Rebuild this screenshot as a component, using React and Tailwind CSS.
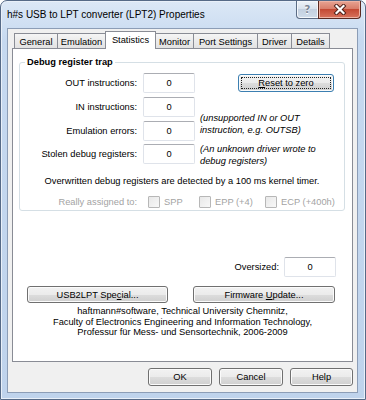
const btnBase =
  "flex items-center justify-center rounded-[3px] border bg-[linear-gradient(#f2f2f2,#ebebeb_50%,#dddddd_50%,#cfcfcf)] shadow-[inset_0_0_0_1px_#fbfbfb] text-black";

function Btn({ children, className = "" }) {
  return <div className={`${btnBase} border-[#707070] ${className}`}>{children}</div>;
}

function DefBtn({ children, className = "" }) {
  return (
    <div className={`${btnBase} border-[#3c7fb1] p-[2px] ${className}`}>
      <div className="flex h-full w-full items-center justify-center border border-dotted border-[#222]">
        {children}
      </div>
    </div>
  );
}

function Field({ className = "" }) {
  return (
    <div
      className={`flex h-[20px] w-[52px] shrink-0 items-center justify-center rounded-[2px] border border-[#dfe3ea] border-t-[#abadb3] bg-white ${className}`}
    >
      0
    </div>
  );
}

function Check({ label, className = "" }) {
  return (
    <div className={`flex items-center ${className}`}>
      <div className="h-[12px] w-[12px] shrink-0 rounded-[1px] border border-[#b7b7b7] bg-[linear-gradient(135deg,#e8e8e8,#f8f8f8)]" />
      <span className="ml-[4px] text-[#a3a3a3]">{label}</span>
    </div>
  );
}

const tabs = [
  { t: "General", w: "w-[44px]" },
  { t: "Emulation", w: "w-[49px]" },
  { t: "Statistics", w: "w-[51px]", sel: true },
  { t: "Monitor", w: "w-[39px]" },
  { t: "Port Settings", w: "w-[65px]" },
  { t: "Driver", w: "w-[35px]" },
  { t: "Details", w: "w-[39px]" },
];

export default function App() {
  return (
    <div className="h-[400px] w-[366px] overflow-hidden bg-white font-['Liberation_Sans',Arial,sans-serif] text-[9.3px] leading-[12px] text-black">
      <div className="flex h-[400px] w-[366px] flex-col rounded-t-[7px] border border-[#566a87] bg-[linear-gradient(#dce8f6,#c6d9f0_40px,#bfd3ec)] shadow-[inset_0_0_0_1px_#e9f0f9]">
        {/* title bar */}
        <div className="flex h-[27px] shrink-0 items-start">
          <div className="mt-[7px] pl-[6px] text-[10px] leading-[13px] text-black">
            h#s USB to LPT converter (LPT2) Properties
          </div>
          <div className="ml-auto mr-[4px] flex h-[18px]">
            <div className="flex w-[23px] items-center justify-center rounded-bl-[4px] border border-t-0 border-[#5b6c85] bg-[linear-gradient(#eef3f9,#d6e0ec_50%,#c3d0e0_50%,#cfdcea)] shadow-[inset_0_0_0_1px_#f4f7fb]">
              <span className="font-['DejaVu_Sans',sans-serif] text-[10px] font-bold leading-[10px] text-[#7c8797] [text-shadow:0_1px_0_#fff]">
                ?
              </span>
            </div>
            <div className="-ml-px flex w-[43px] items-center justify-center rounded-br-[4px] border border-t-0 border-[#5b2a22] bg-[linear-gradient(#e8a493,#d77a66_50%,#c44a34_50%,#d8735d)] shadow-[inset_0_0_0_1px_#eeb3a4]">
              <svg width="14" height="11" viewBox="0 0 14 11">
                <path d="M3.5 2 L10.5 9 M10.5 2 L3.5 9" stroke="#4a1d16" strokeWidth="4" strokeLinecap="square" />
                <path d="M3.5 2 L10.5 9 M10.5 2 L3.5 9" stroke="#ffffff" strokeWidth="2.2" strokeLinecap="square" />
              </svg>
            </div>
          </div>
        </div>

        {/* client area */}
        <div className="mb-[6px] ml-[6px] mr-[7px] flex flex-1 flex-col border border-[#8c9db6] bg-[#f0f0f0] pt-[2px]">
          {/* tabs */}
          <div className="ml-[6px] flex h-[17px] items-end">
            {tabs.map((tab, i) =>
              tab.sel ? (
                <div
                  key={tab.t}
                  className={`relative z-10 -ml-px flex h-[18px] -mb-px ${tab.w} shrink-0 items-start justify-center border border-b-0 border-[#898c95] bg-white pt-[2px]`}
                >
                  {tab.t}
                </div>
              ) : (
                <div
                  key={tab.t}
                  className={`${i === 0 ? "" : "-ml-px"} flex h-[15px] ${tab.w} shrink-0 items-center justify-center border border-b-0 border-[#898c95] bg-[linear-gradient(#f5f5f5,#ebebeb_50%,#e2e2e2)] pt-[1px]`}
                >
                  {tab.t}
                </div>
              )
            )}
          </div>

          {/* panel */}
          <div className="ml-[4px] flex h-[314px] w-[341px] flex-col border border-[#898c95] bg-white">
            {/* group box */}
            <div className="relative ml-[6px] mt-[13px] flex h-[149px] w-[326px] flex-col rounded-[3px] border border-[#d5dfe5]">
              <span className="absolute -top-[7px] left-[5px] bg-white px-[2px] font-bold">Debug register trap</span>

              <div className="mt-[10px] flex items-center">
                <span className="w-[117px] text-right">OUT instructions:</span>
                <Field className="ml-[6px]" />
                <DefBtn className="ml-[43px] h-[18px] w-[96px]">
                  <span>
                    <span className="underline">R</span>eset to zero
                  </span>
                </DefBtn>
              </div>

              <div className="mt-[4px] flex items-center">
                <span className="w-[117px] text-right">IN instructions:</span>
                <Field className="ml-[6px]" />
              </div>

              <div className="mt-[4px] flex items-start">
                <span className="w-[117px] text-right leading-[20px]">Emulation errors:</span>
                <Field className="ml-[6px]" />
                <span className="-mt-[9px] ml-[5px] italic leading-[12px]">
                  (unsupported IN or OUT
                  <br />
                  instruction, e.g. OUTSB)
                </span>
              </div>

              <div className="mt-[3px] flex items-start">
                <span className="w-[117px] text-right leading-[20px]">Stolen debug registers:</span>
                <Field className="ml-[6px]" />
                <span className="-mt-[1px] ml-[5px] italic leading-[12px]">
                  (An unknown driver wrote to
                  <br />
                  debug registers)
                </span>
              </div>

              <div className="mt-[8px] text-center">
                Overwritten debug registers are detected by a 100 ms kernel timer.
              </div>

              <div className="mt-[9px] flex h-[12px] items-center">
                <span className="w-[117px] text-right text-[#a3a3a3]">Really assigned to:</span>
                <Check label="SPP" className="ml-[11px] w-[51px]" />
                <Check label="EPP (+4)" className="w-[66px]" />
                <Check label="ECP (+400h)" />
              </div>
            </div>

            {/* oversized */}
            <div className="mt-[46px] flex items-center justify-end pr-[16px]">
              <span>Oversized:</span>
              <Field className="ml-[5px]" />
            </div>

            {/* buttons */}
            <div className="mt-[9px] flex pl-[14px]">
              <Btn className="h-[17px] w-[141px]">
                <span>
                  USB2LPT Spe<span className="underline">c</span>ial...
                </span>
              </Btn>
              <Btn className="ml-[25px] h-[17px] w-[142px]">
                <span>
                  Firmware <span className="underline">U</span>pdate...
                </span>
              </Btn>
            </div>

            {/* credits */}
            <div className="mt-[3px] text-center leading-[10.5px]">
              haftmann#software, Technical University Chemnitz,
              <br />
              Faculty of Electronics Engineering and Information Technology,
              <br />
              Professur für Mess- und Sensortechnik, 2006-2009
            </div>
          </div>

          {/* dialog buttons */}
          <div className="mt-[6px] flex justify-end gap-[7px] pr-[4px]">
            <Btn className="h-[18px] w-[64px]">OK</Btn>
            <Btn className="h-[18px] w-[64px]">Cancel</Btn>
            <Btn className="h-[18px] w-[63px]">Help</Btn>
          </div>
        </div>
      </div>
    </div>
  );
}
